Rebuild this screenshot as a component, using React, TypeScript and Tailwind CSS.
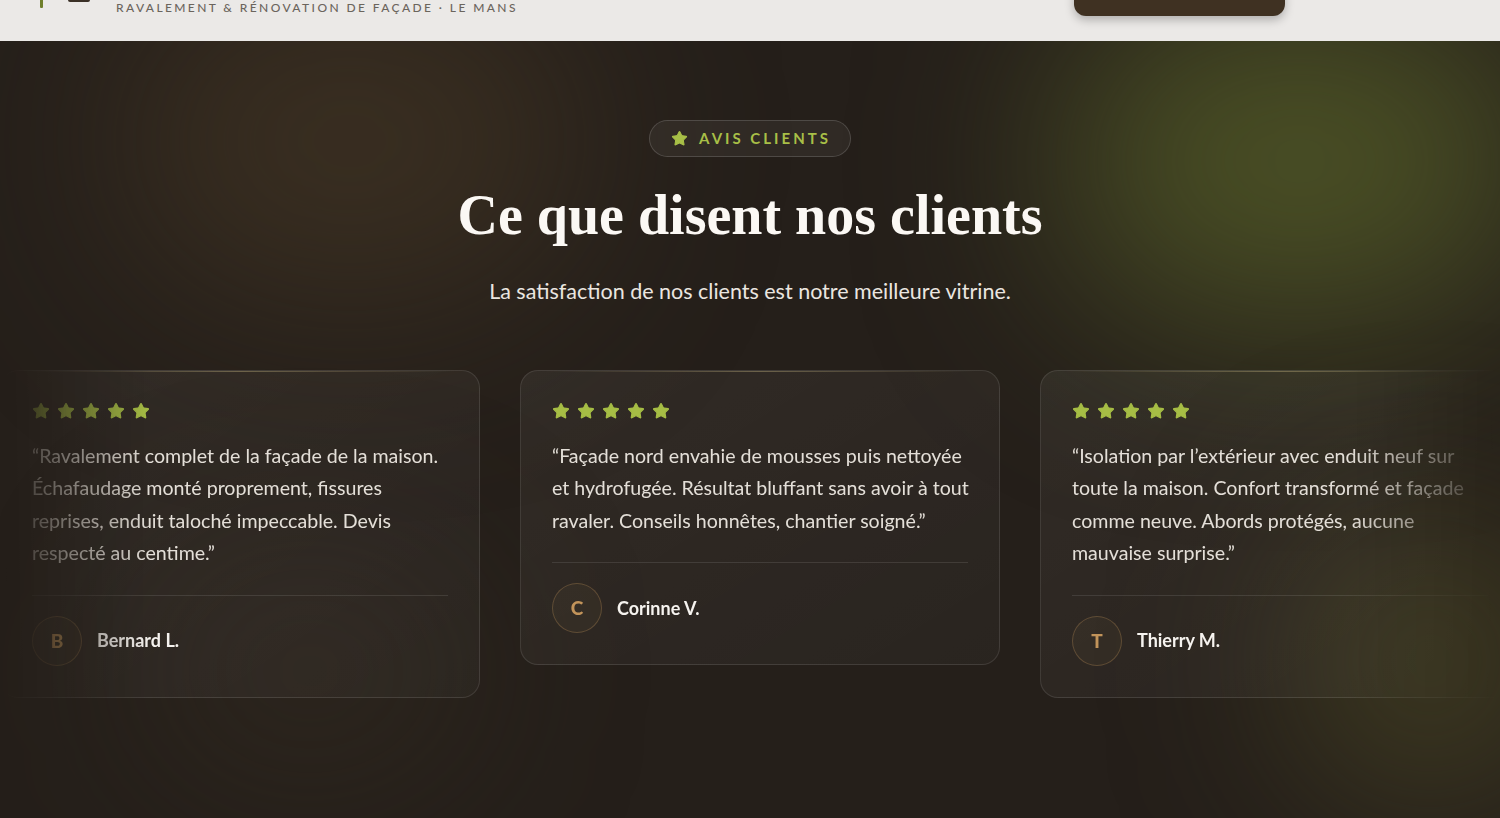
import React from 'react';
import { Star } from 'lucide-react';

type Review = {
  lines: string[];
  name: string;
};

const reviews: Review[] = [
  {
    lines: [
      '“Ravalement complet de la façade de la maison.',
      'Échafaudage monté proprement, fissures',
      'reprises, enduit taloché impeccable. Devis',
      'respecté au centime.”',
    ],
    name: 'Bernard L.',
  },
  {
    lines: [
      '“Façade nord envahie de mousses puis nettoyée',
      'et hydrofugée. Résultat bluffant sans avoir à tout',
      'ravaler. Conseils honnêtes, chantier soigné.”',
    ],
    name: 'Corinne V.',
  },
  {
    lines: [
      '“Isolation par l’extérieur avec enduit neuf sur',
      'toute la maison. Confort transformé et façade',
      'comme neuve. Abords protégés, aucune',
      'mauvaise surprise.”',
    ],
    name: 'Thierry M.',
  },
];

const sans = "font-['Lato','Noto_Sans',sans-serif]";

const ReviewCard: React.FC<{ review: Review }> = ({ review }) => (
  <div className="relative w-[480px] shrink-0 rounded-[18px] border border-white/10 bg-gradient-to-br from-white/[0.055] to-white/[0.025] p-[31px]">
    <div className="pointer-events-none absolute inset-x-6 top-0 h-px bg-gradient-to-r from-transparent via-[#b7a878]/45 to-transparent" />
    <div className="flex gap-[7px] text-[#a6bd45]">
      {[0, 1, 2, 3, 4].map((i) => (
        <Star key={i} className="h-[18px] w-[18px]" fill="currentColor" strokeWidth={1.5} />
      ))}
    </div>
    <p className="mt-[20px] whitespace-nowrap text-[19.6px] leading-[32.5px] text-[#e4dfd8]">
      {review.lines.map((l, i) => (
        <React.Fragment key={i}>
          {l}
          {i < review.lines.length - 1 && <br />}
        </React.Fragment>
      ))}
    </p>
    <div className="mt-[25px] h-px bg-white/10" />
    <div className="flex items-center gap-[15px] pt-[20px]">
      <div className="flex h-[50px] w-[50px] items-center justify-center rounded-full border border-[#c2945a]/30 bg-[#c2945a]/[0.05] text-[19px] font-black text-[#c2945a]">
        {review.name[0]}
      </div>
      <span className="text-[18px] font-bold text-[#f6f3ef]">{review.name}</span>
    </div>
  </div>
);

const App: React.FC = () => {
  return (
    <div className={`min-h-screen bg-[#251f1a] ${sans}`}>
      {/* Header (scrolled) */}
      <header className="h-[41px] overflow-hidden bg-[#ebe9e7]">
        <div className="-mt-[49px] flex h-[90px] items-center px-9">
          <div className="flex items-center">
            <svg width="60" height="48" viewBox="0 0 60 48">
              <rect x="4" y="6" width="3" height="30" rx="1" fill="#6f7f2c" />
              <rect x="32" y="6" width="22" height="24" rx="2" fill="#3b3127" />
            </svg>
            <div className="ml-5 pt-[24px] text-[12px] font-medium tracking-[0.2em] text-[#6b655d]">
              RAVALEMENT &amp; RÉNOVATION DE FAÇADE · LE MANS
            </div>
          </div>
          <div className="ml-auto mr-[179px] h-[40px] w-[211px] rounded-xl bg-[#3f3122] shadow-[0_4px_10px_rgba(0,0,0,0.25)]" />
        </div>
      </header>

      {/* Testimonials */}
      <section className="relative min-h-[777px] overflow-hidden bg-[#251f1a]">
        <div className="pointer-events-none absolute left-[120px] top-[-60px] h-[320px] w-[460px] rounded-full bg-[#54432a]/45 blur-[100px]" />
        <div className="pointer-events-none absolute left-[1060px] top-[-40px] h-[320px] w-[480px] rounded-full bg-[#606b2b]/65 blur-[100px]" />
        <div className="pointer-events-none absolute left-[1290px] top-[470px] h-[300px] w-[280px] rounded-full bg-[#555427]/50 blur-[90px]" />
        <div className="pointer-events-none absolute left-[150px] top-[520px] h-[220px] w-[320px] rounded-full bg-[#3d3526]/35 blur-[90px]" />

        <div className="relative flex flex-col items-center pt-[79px]">
          <div className="flex h-[37px] items-center gap-[11px] rounded-full border border-white/15 bg-white/[0.05] pl-[21px] pr-[19px]">
            <Star className="h-[17px] w-[17px] text-[#a8bf47]" fill="currentColor" strokeWidth={1.5} />
            <span className="text-[15px] font-bold tracking-[0.2em] text-[#a8bf47]">AVIS CLIENTS</span>
          </div>

          <h2 className="mt-[28px] font-['Liberation_Serif','Times_New_Roman',serif] text-[56px] font-bold leading-[1.1] text-[#fbf8f4]">
            Ce que disent nos clients
          </h2>

          <p className="mt-[28px] text-[21.5px] leading-[1.5] text-[#ebe6e0]">
            La satisfaction de nos clients est notre meilleure vitrine.
          </p>
        </div>

        <div className="relative mt-[63px] flex items-start gap-10 [mask-image:linear-gradient(to_right,transparent,black_10%,black_90%,transparent)]">
          {reviews.map((r) => (
            <ReviewCard key={r.name} review={r} />
          ))}
        </div>
      </section>
    </div>
  );
};

export default App;
